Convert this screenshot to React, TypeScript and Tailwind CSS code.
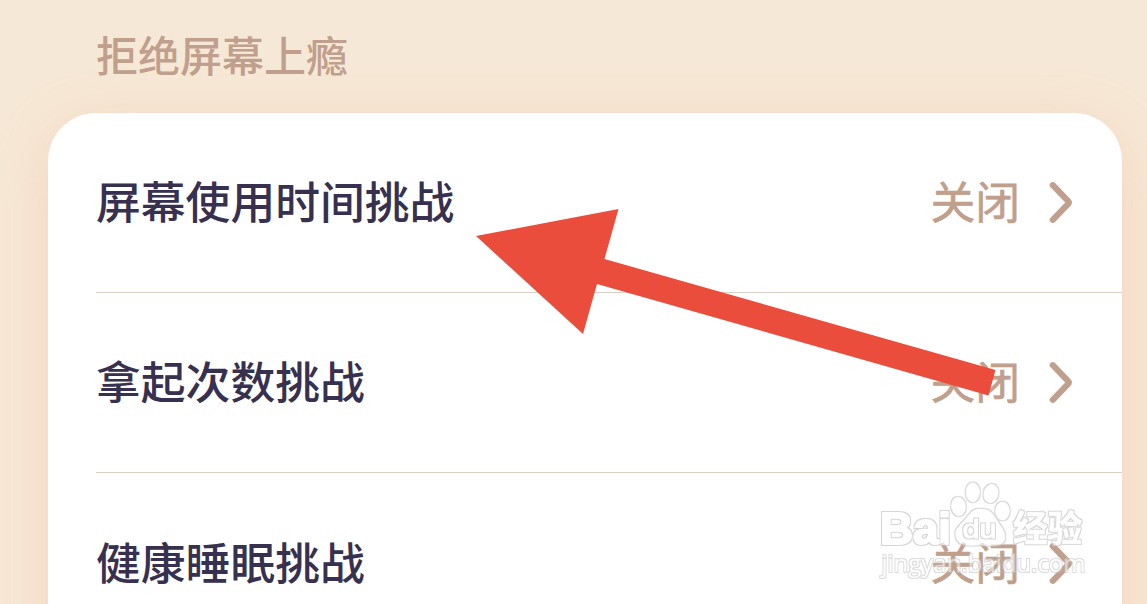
import React from "react";

const rows = [
  { title: "屏幕使用时间挑战", value: "关闭" },
  { title: "拿起次数挑战", value: "关闭" },
  { title: "健康睡眠挑战", value: "关闭" },
];

function Chevron() {
  return (
    <svg className="h-[44px] w-[26px] shrink-0" viewBox="0 0 26 44" fill="none">
      <path
        d="M4.8 5.2 L19.7 20.6 Q21.6 22.5 19.7 24.4 L4.8 39.8"
        stroke="#c09f8c"
        strokeWidth="6.2"
        strokeLinecap="round"
        strokeLinejoin="round"
      />
    </svg>
  );
}

function Row({ title, value, last }: { title: string; value: string; last: boolean }) {
  return (
    <div
      className={
        last
          ? "flex h-[180px] items-center justify-between pr-12"
          : "flex h-[180px] items-center justify-between border-b border-[#d9cfc4] pr-12"
      }
    >
      <span className="pb-1 text-[44.8px] leading-none font-medium text-[#37314f]">{title}</span>
      <span className="flex items-center gap-[28px]">
        <span className="pb-1 text-[44.8px] leading-none text-[#c09f8c] [-webkit-text-stroke:0.6px_#c09f8c]">{value}</span>
        <Chevron />
      </span>
    </div>
  );
}

function Arrow() {
  return (
    <svg className="absolute top-0 left-0 h-[604px] w-[1147px]" viewBox="0 0 1147 604">
      <polygon points="476,236 618.5,209 604.5,259 995.5,370 988.5,395.5 597,284 583,334" fill="#ea4d3c" />
    </svg>
  );
}

function Watermark() {
  return (
    <svg className="absolute top-[470px] left-[860px] h-[134px] w-[287px]" viewBox="0 0 287 134">
      <defs>
        <filter id="edge" x="-5%" y="-5%" width="110%" height="110%" colorInterpolationFilters="sRGB">
          <feMorphology in="SourceAlpha" operator="dilate" radius="0.9" result="grown" />
          <feGaussianBlur in="grown" stdDeviation="0.7" result="blurred" />
          <feFlood floodColor="#c2c2c2" />
          <feComposite in2="blurred" operator="in" result="rim" />
          <feMerge>
            <feMergeNode in="rim" />
            <feMergeNode in="SourceGraphic" />
          </feMerge>
        </filter>
      </defs>
      <g opacity="0.66">
        <g filter="url(#edge)" fill="#ffffff" stroke="#ffffff">
          <ellipse cx="98.5" cy="36.5" rx="7" ry="9.3" strokeWidth="0.5" transform="rotate(-8 98.5 36.5)" />
          <ellipse cx="112.8" cy="22.3" rx="6.8" ry="9.6" strokeWidth="0.5" />
          <ellipse cx="131" cy="23.5" rx="7.1" ry="9.3" strokeWidth="0.5" transform="rotate(12 131 23.5)" />
          <ellipse cx="142.5" cy="41" rx="7" ry="9.1" strokeWidth="0.5" />
          <path
            d="M120 39 C111 39 109 46 103 52 C96 59 95 61 96 67 C98 75 106 76 119 75 C132 76 143 77 145 69 C146 61 140 56 136 49 C132 42 129 39 120 39 Z"
            strokeWidth="0.5"
          />
          <text x="20" y="74" fontSize="44" fontWeight="700" strokeWidth="2" strokeLinejoin="round" fontFamily="'Liberation Sans', sans-serif" textLength="71" lengthAdjust="spacingAndGlyphs">Bai</text>
          <text x="153" y="72" fontSize="36" fontWeight="700" strokeWidth="0.5" fontFamily="'Noto Sans CJK SC', sans-serif" textLength="69" lengthAdjust="spacingAndGlyphs">经验</text>
        </g>
        <text x="21.5" y="102" filter="url(#edge)" fill="#ffffff" opacity="0.85" fontSize="23" fontFamily="'Open Sans', sans-serif" textLength="204" lengthAdjust="spacingAndGlyphs">jingyan.baidu.com</text>
        <text x="102.5" y="67.5" filter="url(#edge)" fill="#ffffff" fontSize="26" fontWeight="400" fontFamily="'Liberation Sans', sans-serif" stroke="#ffffff" strokeWidth="0.8" textLength="34" lengthAdjust="spacingAndGlyphs">du</text>
      </g>
    </svg>
  );
}

export default function App() {
  return (
    <div className="relative h-[604px] w-[1147px] overflow-hidden bg-[#f6e8d6] font-['Noto_Sans_CJK_SC',sans-serif]">
      <h2 className="pt-[33px] pl-24 text-[42px] leading-[42px] font-medium text-[#c09f8c]">拒绝屏幕上瘾</h2>
      <main className="mt-[38px] ml-12 h-[700px] w-[1074px] rounded-[48px] bg-white pl-12 shadow-[0_12px_54px_rgba(240,176,136,0.33)]">
        {rows.map((row, i) => (
          <Row key={row.title} title={row.title} value={row.value} last={i === rows.length - 1} />
        ))}
      </main>
      <Arrow />
      <Watermark />
    </div>
  );
}
